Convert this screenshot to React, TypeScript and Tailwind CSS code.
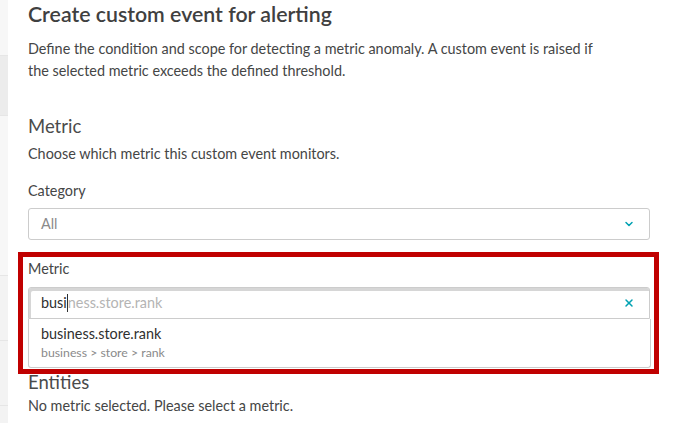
import { ChevronDown, X } from "lucide-react";

const font = { fontFamily: "Lato, 'Open Sans', sans-serif" };

export default function App() {
  return (
    <div className="flex h-[423px] w-[688px] overflow-hidden bg-white text-[#454646]" style={font}>
      <aside className="flex w-2 shrink-0 flex-col bg-[#f3f3f3]">
        <div className="h-[55px] bg-[#f7f7f7]" />
        <div className="h-[60px] border-t border-[#e6e6e6] bg-[#ececec]" />
        <div className="h-[160px] border-t border-[#e6e6e6] bg-[#f7f7f7]" />
        <div className="h-[65px] border-t border-[#e6e6e6]" />
        <div className="h-[65px] border-t border-[#e6e6e6]" />
        <div className="flex-1 border-t border-[#e6e6e6]" />
      </aside>

      <main className="flex-1 pl-5 pr-[38px]">
        <h1 className="text-[21.3px] font-semibold leading-[28px] text-[#3f4040]">
          Create custom event for alerting
        </h1>
        <p className="mt-[10px] w-[575px] text-[14.4px] leading-[22px]">
          Define the condition and scope for detecting a metric anomaly. A custom event is raised if the selected
          metric exceeds the defined threshold.
        </p>

        <h2 className="mt-[32px] text-[18.5px] font-normal leading-[24px] text-[#4a4b4b]">Metric</h2>
        <p className="mt-[6px] text-[14.4px] leading-[20px]">Choose which metric this custom event monitors.</p>

        <label className="mt-[17px] block text-[14.4px] leading-[20px]">Category</label>
        <div className="mt-[7px] flex h-[32px] items-center justify-between rounded-[3px] border border-[#cccccc] pl-3 pr-[14px]">
          <span className="text-[14.4px] text-[#8a8a8a]">All</span>
          <ChevronDown className="size-[12px] text-[#00a1b2]" strokeWidth={3} />
        </div>

        <div className="-ml-[10px] -mr-[9px] mt-[12px] border-[5px] border-[#c00000] pb-[1px] pl-[5px] pr-[3px] pt-[2px]">
          <div className="text-[14.4px] leading-[20px]">Metric</div>
          <div className="mr-px mt-[8px] flex h-[32px] items-center justify-between rounded-t-[3px] border border-[#cccccc] pl-3 pr-[14px] shadow-[inset_2px_3px_0_#d6d6d6]">
            <span className="flex items-center text-[14.4px]">
              <span className="text-[#2f3030]">busi</span>
              <span className="h-[18px] w-px bg-[#2f3030]" />
              <span className="text-[#b4b4b4]">ness.store.rank</span>
            </span>
            <X className="size-[12px] text-[#00a1b2]" strokeWidth={3} />
          </div>
          <div className="rounded-b-[3px] border border-t-0 border-[#cccccc] px-3 pb-[5px] pt-[5px]">
            <div className="text-[14.4px] leading-[20px] text-[#2f3030]">business.store.rank</div>
            <div className="text-[12.3px] leading-[18px] text-[#8a8a8a]">business &gt; store &gt; rank</div>
          </div>
        </div>

        <h2 className="-mt-[2px] text-[18.5px] font-normal leading-[20px] text-[#4a4b4b]">Entities</h2>
        <p className="mt-[4px] text-[14.4px] leading-[20px]">No metric selected. Please select a metric.</p>
      </main>
    </div>
  );
}
